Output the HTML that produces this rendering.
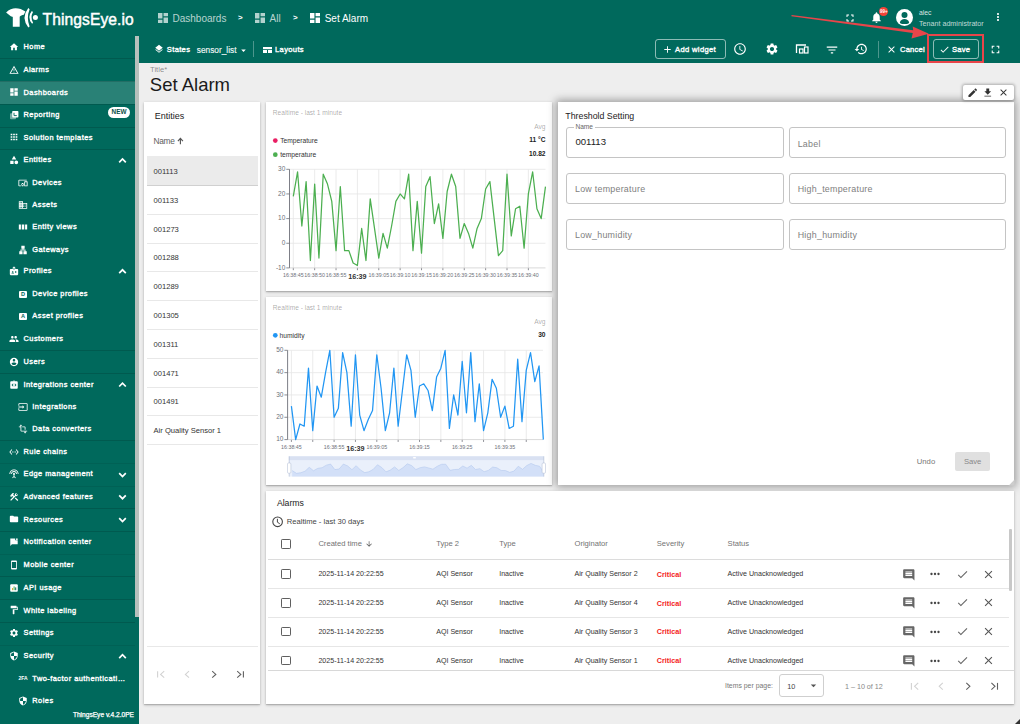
<!DOCTYPE html><html><head><meta charset='utf-8'><style>
*{box-sizing:border-box}
body{margin:0;width:1020px;height:724px;overflow:hidden;position:relative;background:#eeeeee;font-family:"Liberation Sans",sans-serif;color:#222}
.a{position:absolute}
.t{position:absolute;white-space:nowrap;line-height:1}
svg{position:absolute;overflow:visible}
.card{position:absolute;background:#fff;box-shadow:0 1px 3px rgba(0,0,0,.22),0 1px 1px rgba(0,0,0,.14)}
</style></head><body><div class="a" style="left:0px;top:0px;width:1020px;height:63px;background:#00695c"></div>
<svg style="left:0;top:0" width="40" height="30" viewBox="0 0 40 30">
<path fill="#fff" d="M6.1 12.5 C9 9.4 12.5 8.2 15.6 8.2 C19 8.2 22.5 9.3 25.4 11.6 L23.8 14.8 C22 14.9 20.6 15.8 19.7 16.8 L19.7 26.8 L12.8 26.8 L12.8 16.9 C12.2 16.6 11.6 16.6 11.1 16.6 Z"/>
<path fill="#fff" d="M28.3 8.1 Q20.8 17.8 28.3 27.5 L29.6 26.4 Q26.2 17.8 29.6 9.2 Z"/>
<path fill="#fff" d="M31.8 11.1 Q26.6 17.6 32.1 23.7 L33.1 22.8 Q29.9 17.6 33 12 Z"/>
<circle cx="35.4" cy="17.6" r="2.5" fill="#fff"/>
</svg>
<div class="t" style="left:42.50px;top:11.59px;font-size:15.6px;color:#fff;font-weight:normal;-webkit-text-stroke:0.45px #fff;letter-spacing:0.1px">ThingsEye.io</div>
<svg style="left:158px;top:13px" width="10" height="10" viewBox="3 3 18 18"><path fill="rgba(255,255,255,.7)" d="M3 13h8V3H3v10zm0 8h8v-6H3v6zm10 0h8V11h-8v10zm0-18v6h8V3h-8z"/></svg>
<svg style="left:255px;top:13px" width="10" height="10" viewBox="3 3 18 18"><path fill="rgba(255,255,255,.7)" d="M3 13h8V3H3v10zm0 8h8v-6H3v6zm10 0h8V11h-8v10zm0-18v6h8V3h-8z"/></svg>
<svg style="left:310px;top:13px" width="10" height="10" viewBox="3 3 18 18"><path fill="#fff" d="M3 13h8V3H3v10zm0 8h8v-6H3v6zm10 0h8V11h-8v10zm0-18v6h8V3h-8z"/></svg>
<div class="t" style="left:172.50px;top:14.23px;font-size:10px;color:rgba(255,255,255,.72);font-weight:normal;">Dashboards</div>
<div class="t" style="left:238.00px;top:14.23px;font-size:8px;color:#fff;font-weight:bold;">&gt;</div>
<div class="t" style="left:269.50px;top:14.23px;font-size:10px;color:rgba(255,255,255,.72);font-weight:normal;">All</div>
<div class="t" style="left:293.00px;top:14.23px;font-size:8px;color:#fff;font-weight:bold;">&gt;</div>
<div class="t" style="left:324.70px;top:14.23px;font-size:10px;color:#fff;font-weight:normal;">Set Alarm</div>
<svg style="left:844px;top:12px" width="12" height="12" viewBox="0 0 24 24"><path fill="#fff" d="M7 14H5v5h5v-2H7v-3zm-2-4h2V7h3V5H5v5zm12 7h-3v2h5v-5h-2v3zM14 5v2h3v3h2V5h-5z"/></svg>
<svg style="left:870px;top:11px" width="13" height="13" viewBox="0 0 24 24"><path fill="#fff" d="M12 22c1.1 0 2-.9 2-2h-4c0 1.1.89 2 2 2zm6-6v-5c0-3.07-1.64-5.64-4.5-6.32V4c0-.83-.67-1.5-1.5-1.5s-1.5.67-1.5 1.5v.68C7.63 5.36 6 7.92 6 11v5l-2 2v1h16v-1l-2-2z"/></svg>
<div class="a" style="left:879px;top:7px;width:9px;height:9px;border-radius:50%;background:#f44336"></div>
<div class="t" style="left:880.00px;top:9.79px;font-size:4.5px;color:#fff;font-weight:bold;">99+</div>
<div class="a" style="left:896px;top:9px;width:17px;height:17px;border-radius:50%;background:#fff;overflow:hidden"><svg style="left:0;top:0" width="17" height="17" viewBox="0 0 17 17"><circle cx="8.5" cy="6.1" r="3" fill="#00695c"/><path fill="#00695c" d="M3.8 13.9 C4.2 11.2 6.3 10.1 8.5 10.1 C10.7 10.1 12.8 11.2 13.2 13.9 C12 14.7 10.3 15.1 8.5 15.1 C6.7 15.1 5 14.7 3.8 13.9 Z"/></svg></div>
<div class="t" style="left:919.00px;top:10.34px;font-size:6.8px;color:rgba(255,255,255,.85);font-weight:normal;">alec</div>
<div class="t" style="left:919.00px;top:20.75px;font-size:7.15px;color:rgba(255,255,255,.75);font-weight:normal;">Tenant administrator</div>
<svg style="left:992px;top:11px" width="12" height="12" viewBox="0 0 24 24"><path fill="#fff" d="M12 8c1.1 0 2-.9 2-2s-.9-2-2-2-2 .9-2 2 .9 2 2 2zm0 2c-1.1 0-2 .9-2 2s.9 2 2 2 2-.9 2-2-.9-2-2-2zm0 6c-1.1 0-2 .9-2 2s.9 2 2 2 2-.9 2-2-.9-2-2-2z"/></svg>
<svg style="left:154px;top:44px" width="10" height="10" viewBox="0 0 24 24"><path fill="#fff" d="M11.99 18.54l-7.37-5.73L3 14.07l9 7 9-7-1.63-1.27-7.38 5.74zM12 16l7.36-5.73L21 9l-9-7-9 7 1.63 1.27L12 16z"/></svg>
<div class="t" style="left:166.80px;top:46.17px;font-size:7.6px;color:#fff;font-weight:normal;-webkit-text-stroke:0.35px #fff;letter-spacing:0.33px">States</div>
<div class="t" style="left:196.80px;top:46.17px;font-size:8.3px;color:rgba(255,255,255,.9);font-weight:normal;-webkit-text-stroke:0.2px rgba(255,255,255,.9)">sensor_list</div>
<svg style="left:238.3px;top:44.6px" width="11" height="11" viewBox="0 0 24 24"><path fill="#fff" d="M7 10l5 5 5-5z"/></svg>
<div class="a" style="left:253px;top:41px;width:1px;height:16px;background:rgba(255,255,255,.3)"></div>
<svg style="left:263px;top:47px" width="9" height="6" viewBox="0 0 9 6"><rect x="0" y="0" width="9" height="2.2" fill="#fff"/><rect x="0" y="3" width="4" height="3" fill="#fff"/><rect x="5" y="3" width="4" height="3" fill="#fff"/></svg>
<div class="t" style="left:275.00px;top:46.17px;font-size:7.6px;color:#fff;font-weight:normal;-webkit-text-stroke:0.35px #fff;letter-spacing:0.34px">Layouts</div>
<div class="a" style="left:655px;top:39px;width:71px;height:20px;border:1px solid rgba(255,255,255,.55);border-radius:3px"></div>
<svg style="left:661.5px;top:43.5px" width="11" height="11" viewBox="0 0 24 24"><path fill="#fff" d="M19 13h-6v6h-2v-6H5v-2h6V5h2v6h6v2z"/></svg>
<div class="t" style="left:675.00px;top:46.17px;font-size:7.6px;color:#fff;font-weight:normal;-webkit-text-stroke:0.35px #fff;letter-spacing:0.35px">Add widget</div>
<svg style="left:733px;top:42px" width="14" height="14" viewBox="0 0 24 24"><path fill="#fff" d="M11.99 2C6.47 2 2 6.48 2 12s4.47 10 9.99 10C17.52 22 22 17.52 22 12S17.52 2 11.99 2zM12 20c-4.42 0-8-3.58-8-8s3.58-8 8-8 8 3.58 8 8-3.58 8-8 8zm.5-13H11v6l5.25 3.15.75-1.23-4.5-2.67z"/></svg>
<svg style="left:765px;top:42px" width="14" height="14" viewBox="0 0 24 24"><path fill="#fff" d="M19.14 12.94c.04-.3.06-.61.06-.94 0-.32-.02-.64-.07-.94l2.03-1.58c.18-.14.23-.41.12-.61l-1.92-3.32c-.12-.22-.37-.29-.59-.22l-2.39.96c-.5-.38-1.03-.7-1.62-.94l-.36-2.54c-.04-.24-.24-.41-.48-.41h-3.84c-.24 0-.43.17-.47.41l-.36 2.540c-.59.24-1.130.57-1.62.94l-2.39-.96c-.22-.08-.47 0-.59.22L2.74 8.87c-.12.21-.08.47.12.61l2.03 1.58c-.05.3-.09.63-.09.94s.02.64.07.94l-2.03 1.58c-.18.14-.23.41-.12.61l1.92 3.32c.12.22.37.29.59.22l2.39-.96c.5.38 1.03.7 1.62.94l.36 2.54c.05.24.24.41.48.41h3.84c.24 0 .44-.17.47-.41l.36-2.54c.59-.24 1.13-.56 1.62-.94l2.39.96c.22.08.47 0 .59-.22l1.92-3.32c.12-.22.07-.47-.12-.61l-2.01-1.58zM12 15.6c-1.98 0-3.6-1.62-3.6-3.6s1.62-3.6 3.6-3.6 3.6 1.62 3.6 3.6-1.62 3.6-3.6 3.6z"/></svg>
<svg style="left:795px;top:44px" width="14" height="10" viewBox="0 0 14 10"><path fill="none" stroke="#fff" stroke-width="1.3" d="M1.5 9V1H11"/><rect x="4.5" y="5" width="3.5" height="4" fill="none" stroke="#fff" stroke-width="1.2"/><rect x="9.5" y="3" width="3.5" height="6" fill="none" stroke="#fff" stroke-width="1.2"/></svg>
<svg style="left:825px;top:43px" width="14" height="14" viewBox="0 0 24 24"><path fill="#fff" d="M10 18h4v-2h-4v2zM3 6v2h18V6H3zm3 7h12v-2H6v2z"/></svg>
<svg style="left:854px;top:42px" width="14" height="14" viewBox="0 0 24 24"><path fill="#fff" d="M13 3c-4.97 0-9 4.03-9 9H1l3.89 3.89.07.14L9 12H6c0-3.87 3.13-7 7-7s7 3.13 7 7-3.13 7-7 7c-1.93 0-3.68-.79-4.94-2.06l-1.42 1.42C8.27 19.99 10.51 21 13 21c4.97 0 9-4.03 9-9s-4.03-9-9-9zm-1 5v5l4.28 2.54.72-1.21-3.5-2.08V8H12z"/></svg>
<div class="a" style="left:878px;top:41px;width:1px;height:17px;background:rgba(255,255,255,.3)"></div>
<svg style="left:886px;top:44px" width="11" height="11" viewBox="0 0 24 24"><path fill="#fff" d="M19 6.41L17.590 5 12 10.59 6.41 5 5 6.41 10.59 12 5 17.59 6.41 19 12 13.41 17.59 19 19 17.59 13.41 12z"/></svg>
<div class="t" style="left:900.00px;top:46.17px;font-size:7.6px;color:#fff;font-weight:normal;-webkit-text-stroke:0.35px #fff;letter-spacing:0.2px">Cancel</div>
<div class="a" style="left:933px;top:39px;width:46px;height:20px;border:1px solid rgba(255,255,255,.55);border-radius:3px"></div>
<svg style="left:939px;top:43.5px" width="11" height="11" viewBox="0 0 24 24"><path fill="#fff" d="M9 16.17L4.83 12l-1.42 1.41L9 19 21 7l-1.41-1.41z"/></svg>
<div class="t" style="left:952.00px;top:46.17px;font-size:7.6px;color:#fff;font-weight:normal;-webkit-text-stroke:0.35px #fff;letter-spacing:0.2px">Save</div>
<svg style="left:989px;top:43px" width="13" height="13" viewBox="0 0 24 24"><path fill="#fff" d="M7 14H5v5h5v-2H7v-3zm-2-4h2V7h3V5H5v5zm12 7h-3v2h5v-5h-2v3zM14 5v2h3v3h2V5h-5z"/></svg>
<div class="a" style="left:927px;top:34px;width:57px;height:29px;border:2px solid #e8454a"></div>
<svg style="left:0;top:0" width="1020" height="70" viewBox="0 0 1020 70">
<path fill="#e8454a" d="M791.6 15 L913.2 30.3 L912.7 26.6 L928.8 33.7 L911.5 38.4 L912.8 32.9 L791.4 16.2 Z"/>
</svg>
<div class="a" style="left:0px;top:36px;width:139px;height:688px;background:#00695c"></div>
<div class="a" style="left:135px;top:36px;width:4px;height:581px;background:#b7c0bc"></div>
<div class="a" style="left:0px;top:81.1px;width:135px;height:22.5px;background:rgba(255,255,255,.16)"></div>
<svg style="left:8.6px;top:41.7px" width="10" height="10" viewBox="0 0 24 24"><path fill="#fff" d="M10 20v-6h4v6h5v-8h3L12 3 2 12h3v8z"/></svg>
<div class="t" style="left:23.50px;top:42.84px;font-size:7.4px;color:#fff;font-weight:normal;-webkit-text-stroke:0.35px #fff;letter-spacing:0.48px">Home</div>
<svg style="left:8.6px;top:64.5px" width="10" height="10" viewBox="0 0 24 24"><path fill="#fff" d="M12 5.99L19.53 19H4.47L12 5.99M12 2L1 21h22L12 2zm1 14h-2v2h2v-2zm0-6h-2v4h2v-4z"/></svg>
<div class="t" style="left:23.50px;top:65.64px;font-size:7.4px;color:#fff;font-weight:normal;-webkit-text-stroke:0.35px #fff;letter-spacing:0.48px">Alarms</div>
<svg style="left:8.6px;top:87.4px" width="10" height="10" viewBox="0 0 24 24"><path fill="#fff" d="M3 13h8V3H3v10zm0 8h8v-6H3v6zm10 0h8V11h-8v10zm0-18v6h8V3h-8z"/></svg>
<div class="t" style="left:23.50px;top:88.54px;font-size:7.4px;color:#fff;font-weight:normal;-webkit-text-stroke:0.35px #fff;letter-spacing:0.48px">Dashboards</div>
<svg style="left:8.6px;top:110.20px" width="10" height="10" viewBox="0 0 10 10"><rect x="1" y="3.2" width="6" height="6" rx="1" fill="rgba(255,255,255,.45)"/><rect x="3.2" y="1" width="6.2" height="6.6" rx=".8" fill="#fff"/><path d="M5 2.8V5.6H7.8" fill="none" stroke="#00695c" stroke-width=".9"/></svg>
<div class="t" style="left:23.50px;top:111.34px;font-size:7.4px;color:#fff;font-weight:normal;-webkit-text-stroke:0.35px #fff;letter-spacing:0.48px">Reporting</div>
<svg style="left:8.6px;top:132.4px" width="10" height="10" viewBox="0 0 24 24"><path fill="#fff" d="M4 8h4V4H4v4zm6 12h4v-4h-4v4zm-6 0h4v-4H4v4zm0-6h4v-4H4v4zm6 0h4v-4h-4v4zm6-10v4h4V4h-4zm-6 4h4V4h-4v4zm6 6h4v-4h-4v4zm0 6h4v-4h-4v4z"/></svg>
<div class="t" style="left:23.50px;top:133.54px;font-size:7.4px;color:#fff;font-weight:normal;-webkit-text-stroke:0.35px #fff;letter-spacing:0.48px">Solution templates</div>
<svg style="left:8.6px;top:155.3px" width="10" height="10" viewBox="0 0 24 24"><path fill="#fff" d="M12 2l-5.5 9h11zM17.5 13a4.5 4.5 0 1 0 0 9a4.5 4.5 0 1 0 0-9zM3 13.5h8v8H3z"/></svg>
<div class="t" style="left:23.50px;top:156.44px;font-size:7.4px;color:#fff;font-weight:normal;-webkit-text-stroke:0.35px #fff;letter-spacing:0.48px">Entities</div>
<svg style="left:0;top:0" width="1" height="1"><path d="M119.2 162.30 L122.5 158.90 L125.8 162.30" fill="none" stroke="#fff" stroke-width="1.7"/></svg>
<svg style="left:17.6px;top:177.8px" width="10" height="10" viewBox="0 0 24 24"><path fill="#fff" d="M3 6h18V4H3c-1.1 0-2 .9-2 2v12c0 1.1.9 2 2 2h4v-2H3V6zm10 6H9v1.78c-.61.55-1 1.33-1 2.22s.39 1.67 1 2.22V20h4v-1.78c.61-.55 1-1.34 1-2.22s-.39-1.67-1-2.22V12zm-2 5.5c-.83 0-1.5-.67-1.5-1.5s.67-1.5 1.5-1.5 1.5.67 1.5 1.5-.67 1.5-1.5 1.5zM22 8h-6c-.5 0-1 .5-1 1v10c0 .5.5 1 1 1h6c.5 0 1-.5 1-1V9c0-.5-.5-1-1-1zm-1 10h-4v-8h4v8z"/></svg>
<div class="t" style="left:32.30px;top:178.94px;font-size:7.4px;color:#fff;font-weight:normal;-webkit-text-stroke:0.35px #fff;letter-spacing:0.48px">Devices</div>
<svg style="left:17.6px;top:200px" width="10" height="10" viewBox="0 0 24 24"><path fill="#fff" d="M12 7V3H2v18h20V7H12zM6 19H4v-2h2v2zm0-4H4v-2h2v2zm0-4H4V9h2v2zm0-4H4V5h2v2zm4 12H8v-2h2v2zm0-4H8v-2h2v2zm0-4H8V9h2v2zm0-4H8V5h2v2zm10 12h-8v-2h2v-2h-2v-2h2v-2h-2V9h8v10zm-2-8h-2v2h2v-2zm0 4h-2v2h2v-2z"/></svg>
<div class="t" style="left:32.30px;top:201.14px;font-size:7.4px;color:#fff;font-weight:normal;-webkit-text-stroke:0.35px #fff;letter-spacing:0.48px">Assets</div>
<svg style="left:17.6px;top:222.3px" width="10" height="10" viewBox="0 0 24 24"><path fill="#fff" d="M2 6h5v12H2zM9 6h6v12H9zM17 6h5v12h-5z"/></svg>
<div class="t" style="left:32.30px;top:223.44px;font-size:7.4px;color:#fff;font-weight:normal;-webkit-text-stroke:0.35px #fff;letter-spacing:0.48px">Entity views</div>
<svg style="left:17.6px;top:244.8px" width="10" height="10" viewBox="0 0 24 24"><path fill="#fff" d="M13 22h8v-7h-3v-4h-5V9h3V2H8v7h3v2H6v4H3v7h8v-7H8v-2h8v2h-3z"/></svg>
<div class="t" style="left:32.30px;top:245.94px;font-size:7.4px;color:#fff;font-weight:normal;-webkit-text-stroke:0.35px #fff;letter-spacing:0.48px">Gateways</div>
<svg style="left:8.6px;top:266.2px" width="10" height="10" viewBox="0 0 24 24"><path fill="#fff" d="M20 7h-5V4c0-1.1-.9-2-2-2h-2c-1.1 0-2 .9-2 2v3H4c-1.1 0-2 .9-2 2v11c0 1.1.9 2 2 2h16c1.1 0 2-.9 2-2V9c0-1.1-.9-2-2-2zM9 12c.83 0 1.5.67 1.5 1.5S9.83 15 9 15s-1.5-.67-1.5-1.5S8.17 12 9 12zm3 6H6v-.43c0-.6.36-1.15.92-1.39.64-.28 1.34-.43 2.08-.43s1.44.15 2.08.43c.55.24.92.78.92 1.39V18zm1-9h-2V4h2v5zm4.5 7.5h-3V15h3v1.5zm0-3h-3V12h3v1.5z"/></svg>
<div class="t" style="left:23.50px;top:267.34px;font-size:7.4px;color:#fff;font-weight:normal;-webkit-text-stroke:0.35px #fff;letter-spacing:0.48px">Profiles</div>
<svg style="left:0;top:0" width="1" height="1"><path d="M119.2 273.20 L122.5 269.80 L125.8 273.20" fill="none" stroke="#fff" stroke-width="1.7"/></svg>
<div class="a" style="left:19.200000000000003px;top:290.50px;width:7.4px;height:7px;background:#fff;border-radius:1px"></div>
<div class="t" style="left:21.00px;top:291.56px;font-size:5.6px;color:#00695c;font-weight:bold;">D</div>
<div class="t" style="left:32.30px;top:290.24px;font-size:7.4px;color:#fff;font-weight:normal;-webkit-text-stroke:0.35px #fff;letter-spacing:0.48px">Device profiles</div>
<div class="a" style="left:19.200000000000003px;top:312.70px;width:7.4px;height:7px;background:#fff;border-radius:1px"></div>
<div class="t" style="left:21.00px;top:313.76px;font-size:5.6px;color:#00695c;font-weight:bold;">A</div>
<div class="t" style="left:32.30px;top:312.44px;font-size:7.4px;color:#fff;font-weight:normal;-webkit-text-stroke:0.35px #fff;letter-spacing:0.48px">Asset profiles</div>
<svg style="left:8.6px;top:333.9px" width="10" height="10" viewBox="0 0 24 24"><path fill="#fff" d="M16 11c1.66 0 2.99-1.34 2.99-3S17.66 5 16 5c-1.66 0-3 1.34-3 3s1.34 3 3 3zm-8 0c1.66 0 2.990-1.34 2.99-3S9.66 5 8 5C6.34 5 5 6.34 5 8s1.34 3 3 3zm0 2c-2.33 0-7 1.17-7 3.5V19h14v-2.5c0-2.33-4.67-3.5-7-3.5zm8 0c-.29 0-.62.02-.97.05 1.16.84 1.97 1.97 1.97 3.45V19h6v-2.5c0-2.33-4.67-3.5-7-3.5z"/></svg>
<div class="t" style="left:23.50px;top:335.04px;font-size:7.4px;color:#fff;font-weight:normal;-webkit-text-stroke:0.35px #fff;letter-spacing:0.48px">Customers</div>
<svg style="left:8.6px;top:356.7px" width="10" height="10" viewBox="0 0 24 24"><path fill="#fff" d="M12 2C6.48 2 2 6.48 2 12s4.48 10 10 10 10-4.48 10-10S17.52 2 12 2zm0 3c1.66 0 3 1.34 3 3s-1.34 3-3 3-3-1.34-3-3 1.34-3 3-3zm0 14.2c-2.5 0-4.71-1.28-6-3.220.03-1.99 4-3.08 6-3.08 1.99 0 5.97 1.09 6 3.08-1.29 1.94-3.5 3.22-6 3.22z"/></svg>
<div class="t" style="left:23.50px;top:357.84px;font-size:7.4px;color:#fff;font-weight:normal;-webkit-text-stroke:0.35px #fff;letter-spacing:0.48px">Users</div>
<svg style="left:8.6px;top:379.5px" width="10" height="10" viewBox="0 0 24 24"><path fill="#fff" d="M19 3h-4.18C14.4 1.84 13.3 1 12 1c-1.3 0-2.4.84-2.82 2H5c-1.1 0-2 .9-2 2v14c0 1.1.9 2 2 2h14c1.1 0 2-.9 2-2V5c0-1.1-.9-2-2-2zM11 14.17l-1.41 1.42L6 12l3.59-3.59L11 9.83 8.83 12 11 14.17zM12 4.25c-.41 0-.75-.34-.75-.75s.34-.75.75-.75.75.34.75.75-.34.75-.75.75zm2.41 11.34L13 14.17 15.17 12 13 9.83l1.41-1.42L18 12l-3.59 3.59z"/></svg>
<div class="t" style="left:23.50px;top:380.64px;font-size:7.4px;color:#fff;font-weight:normal;-webkit-text-stroke:0.35px #fff;letter-spacing:0.48px">Integrations center</div>
<svg style="left:0;top:0" width="1" height="1"><path d="M119.2 386.50 L122.5 383.10 L125.8 386.50" fill="none" stroke="#fff" stroke-width="1.7"/></svg>
<svg style="left:17.6px;top:401.8px" width="10" height="10" viewBox="0 0 24 24"><path fill="#fff" d="M21 3.01H3c-1.1 0-2 .9-2 2V9h2V4.99h18v14.03H3V15H1v4.01c0 1.1.9 1.98 2 1.98h18c1.1 0 2-.88 2-1.98v-14c0-1.11-.9-2-2-2zM11 16l4-4-4-4v3H1v2h10v3z"/></svg>
<div class="t" style="left:32.30px;top:402.94px;font-size:7.4px;color:#fff;font-weight:normal;-webkit-text-stroke:0.35px #fff;letter-spacing:0.48px">Integrations</div>
<svg style="left:17.6px;top:424px" width="10" height="10" viewBox="0 0 24 24"><path fill="#fff" d="M22 18v-2H8V4h2L7 1 4 4h2v2H2v2h4v8c0 1.1.9 2 2 2h8v2h-2l3 3 3-3h-2v-2h4zM10 8h6v6h2V8c0-1.1-.9-2-2-2h-6v2z"/></svg>
<div class="t" style="left:32.30px;top:425.14px;font-size:7.4px;color:#fff;font-weight:normal;-webkit-text-stroke:0.35px #fff;letter-spacing:0.48px">Data converters</div>
<svg style="left:8.6px;top:446.6px" width="10" height="10" viewBox="0 0 24 24"><path fill="#fff" d="M7.77 6.76L6.23 5.48.82 12l5.41 6.52 1.54-1.28L3.42 12l4.35-5.24zM7 13h2v-2H7v2zm10-2h-2v2h2v-2zm-6 2h2v-2h-2v2zm6.77-7.52l-1.54 1.28L20.58 12l-4.35 5.24 1.54 1.28L23.18 12l-5.41-6.52z"/></svg>
<div class="t" style="left:23.50px;top:447.74px;font-size:7.4px;color:#fff;font-weight:normal;-webkit-text-stroke:0.35px #fff;letter-spacing:0.48px">Rule chains</div>
<svg style="left:8.6px;top:469.3px" width="10" height="10" viewBox="0 0 24 24"><path fill="#fff" d="M12 5c-3.87 0-7 3.13-7 7h2c0-2.76 2.24-5 5-5s5 2.24 5 5h2c0-3.87-3.13-7-7-7zm1 9.29c.88-.39 1.5-1.26 1.5-2.29 0-1.38-1.12-2.5-2.5-2.5S9.5 10.62 9.5 12c0 1.02.62 1.9 1.5 2.29v3.3L7.59 21 9 22.41l3-3 3 3L16.41 21 13 17.59v-3.3zM12 1C5.93 1 1 5.93 1 12h2c0-4.970 4.03-9 9-9s9 4.03 9 9h2c0-6.07-4.93-11-11-11z"/></svg>
<div class="t" style="left:23.50px;top:470.44px;font-size:7.4px;color:#fff;font-weight:normal;-webkit-text-stroke:0.35px #fff;letter-spacing:0.48px">Edge management</div>
<svg style="left:0;top:0" width="1" height="1"><path d="M119.2 473.10 L122.5 476.50 L125.8 473.10" fill="none" stroke="#fff" stroke-width="1.7"/></svg>
<svg style="left:8.6px;top:491.5px" width="10" height="10" viewBox="0 0 24 24"><path fill="#fff" d="M13.78 15.17l2.12-2.12 6.36 6.36-2.12 2.12zM17.5 10c1.93 0 3.5-1.57 3.5-3.5 0-.58-.16-1.12-.41-1.6l-2.7 2.7-1.49-1.49 2.7-2.7c-.48-.25-1.02-.41-1.6-.41C15.57 3 14 4.57 14 6.5c0 .41.08.8.21 1.16l-1.85 1.85-1.78-1.78.71-.71-1.41-1.41L12 3.49c-1.17-1.17-3.07-1.17-4.24 0L4.22 7.03l1.41 1.41H2.81l-.71.71 3.54 3.54.71-.71V9.15l1.41 1.41.71-.71 1.78 1.78-7.41 7.41 2.12 2.12L16.34 9.79c.36.13.75.21 1.16.21z"/></svg>
<div class="t" style="left:23.50px;top:492.64px;font-size:7.4px;color:#fff;font-weight:normal;-webkit-text-stroke:0.35px #fff;letter-spacing:0.48px">Advanced features</div>
<svg style="left:0;top:0" width="1" height="1"><path d="M119.2 495.30 L122.5 498.70 L125.8 495.30" fill="none" stroke="#fff" stroke-width="1.7"/></svg>
<svg style="left:8.6px;top:514.4px" width="10" height="10" viewBox="0 0 24 24"><path fill="#fff" d="M10 4H4c-1.1 0-1.99.9-1.99 2L2 18c0 1.1.9 2 2 2h16c1.1 0 2-.9 2-2V8c0-1.1-.9-2-2-2h-8l-2-2z"/></svg>
<div class="t" style="left:23.50px;top:515.54px;font-size:7.4px;color:#fff;font-weight:normal;-webkit-text-stroke:0.35px #fff;letter-spacing:0.48px">Resources</div>
<svg style="left:0;top:0" width="1" height="1"><path d="M119.2 518.20 L122.5 521.60 L125.8 518.20" fill="none" stroke="#fff" stroke-width="1.7"/></svg>
<svg style="left:8.6px;top:537.20px" width="10" height="10" viewBox="0 0 10 10"><path fill="#fff" d="M1.3 1.6 H6.2 V3.3 H8.7 V7.2 H2.9 L1.3 8.9 Z"/><rect x="7" y="1.5" width="1.7" height="1.4" fill="#fff"/></svg>
<div class="t" style="left:23.50px;top:538.34px;font-size:7.4px;color:#fff;font-weight:normal;-webkit-text-stroke:0.35px #fff;letter-spacing:0.48px">Notification center</div>
<svg style="left:8.6px;top:559.7px" width="10" height="10" viewBox="0 0 24 24"><path fill="#fff" d="M17 1.01L7 1c-1.1 0-1.99.9-1.99 2v18c0 1.1.89 2 1.99 2h10c1.1 0 2-.9 2-2V3c0-1.1-.9-1.99-2-1.99zM17 19H7V5h10v14z"/></svg>
<div class="t" style="left:23.50px;top:560.84px;font-size:7.4px;color:#fff;font-weight:normal;-webkit-text-stroke:0.35px #fff;letter-spacing:0.48px">Mobile center</div>
<svg style="left:8.6px;top:582.60px" width="10" height="10" viewBox="0 0 10 10"><rect x="1.2" y="1.2" width="7.6" height="7.6" rx="1" fill="#fff"/><rect x="3" y="5" width="1" height="2.2" fill="#e0b030"/><rect x="4.6" y="3.4" width="1" height="3.8" fill="#4caf50"/><rect x="6.2" y="4.4" width="1" height="2.8" fill="#00695c"/></svg>
<div class="t" style="left:23.50px;top:583.74px;font-size:7.4px;color:#fff;font-weight:normal;-webkit-text-stroke:0.35px #fff;letter-spacing:0.48px">API usage</div>
<svg style="left:8.6px;top:605.4px" width="10" height="10" viewBox="0 0 24 24"><path fill="#fff" d="M18 4V3c0-.55-.45-1-1-1H5c-.55 0-1 .45-1 1v4c0 .55.45 1 1 1h12c.55 0 1-.45 1-1V6h1v4H9v11c0 .55.45 1 1 1h2c.55 0 1-.45 1-1v-9h8V4h-3z"/></svg>
<div class="t" style="left:23.50px;top:606.54px;font-size:7.4px;color:#fff;font-weight:normal;-webkit-text-stroke:0.35px #fff;letter-spacing:0.48px">White labeling</div>
<svg style="left:8.6px;top:628.3px" width="10" height="10" viewBox="0 0 24 24"><path fill="#fff" d="M19.14 12.94c.04-.3.06-.61.06-.94 0-.32-.02-.64-.07-.94l2.03-1.58c.18-.14.23-.41.12-.61l-1.92-3.32c-.12-.22-.37-.29-.59-.22l-2.39.96c-.5-.38-1.03-.7-1.62-.94l-.36-2.54c-.04-.24-.24-.41-.48-.41h-3.84c-.24 0-.43.17-.47.41l-.36 2.540c-.59.24-1.130.57-1.62.94l-2.39-.96c-.22-.08-.47 0-.59.22L2.74 8.87c-.12.21-.08.47.12.61l2.03 1.58c-.05.3-.09.63-.09.94s.02.64.07.94l-2.03 1.58c-.18.14-.23.41-.12.61l1.92 3.32c.12.22.37.29.59.22l2.39-.96c.5.38 1.03.7 1.62.94l.36 2.54c.05.24.24.41.48.41h3.84c.24 0 .44-.17.47-.41l.36-2.54c.59-.24 1.13-.56 1.62-.94l2.39.96c.22.08.47 0 .59-.22l1.92-3.32c.12-.22.07-.47-.12-.61l-2.01-1.58zM12 15.6c-1.98 0-3.6-1.62-3.6-3.6s1.62-3.6 3.6-3.6 3.6 1.62 3.6 3.6-1.62 3.6-3.6 3.6z"/></svg>
<div class="t" style="left:23.50px;top:629.44px;font-size:7.4px;color:#fff;font-weight:normal;-webkit-text-stroke:0.35px #fff;letter-spacing:0.48px">Settings</div>
<svg style="left:8.6px;top:651.1px" width="10" height="10" viewBox="0 0 24 24"><path fill="#fff" d="M12 1L3 5v6c0 5.55 3.84 10.74 9 12 5.16-1.26 9-6.45 9-12V5l-9-4zm0 10.99h7c-.53 4.12-3.28 7.79-7 8.94V12H5V6.3l7-3.11v8.8z"/></svg>
<div class="t" style="left:23.50px;top:652.24px;font-size:7.4px;color:#fff;font-weight:normal;-webkit-text-stroke:0.35px #fff;letter-spacing:0.48px">Security</div>
<svg style="left:0;top:0" width="1" height="1"><path d="M119.2 658.10 L122.5 654.70 L125.8 658.10" fill="none" stroke="#fff" stroke-width="1.7"/></svg>
<div class="t" style="left:18.40px;top:676.27px;font-size:5px;color:#fff;font-weight:bold;">2FA</div>
<div class="t" style="left:32.30px;top:674.64px;font-size:7.4px;color:#fff;font-weight:normal;-webkit-text-stroke:0.35px #fff;letter-spacing:0.48px">Two-factor authenticati…</div>
<svg style="left:17.6px;top:695.8px" width="10" height="10" viewBox="0 0 24 24"><path fill="#fff" d="M12 1L3 5v6c0 5.55 3.84 10.74 9 12 5.16-1.26 9-6.45 9-12V5l-9-4zm0 10.99h7c-.53 4.12-3.28 7.79-7 8.94V12H5V6.3l7-3.11v8.8z"/></svg>
<div class="t" style="left:32.30px;top:696.94px;font-size:7.4px;color:#fff;font-weight:normal;-webkit-text-stroke:0.35px #fff;letter-spacing:0.48px">Roles</div>
<div class="a" style="left:0px;top:57.9px;width:135px;height:1px;background:rgba(0,0,0,0.14)"></div>
<div class="a" style="left:0px;top:81.1px;width:135px;height:1px;background:rgba(0,0,0,0.14)"></div>
<div class="a" style="left:0px;top:103.6px;width:135px;height:1px;background:rgba(0,0,0,0.14)"></div>
<div class="a" style="left:0px;top:126.5px;width:135px;height:1px;background:rgba(0,0,0,0.14)"></div>
<div class="a" style="left:0px;top:149.3px;width:135px;height:1px;background:rgba(0,0,0,0.14)"></div>
<div class="a" style="left:0px;top:350.4px;width:135px;height:1px;background:rgba(0,0,0,0.14)"></div>
<div class="a" style="left:0px;top:373.3px;width:135px;height:1px;background:rgba(0,0,0,0.14)"></div>
<div class="a" style="left:0px;top:440.3px;width:135px;height:1px;background:rgba(0,0,0,0.14)"></div>
<div class="a" style="left:0px;top:463.2px;width:135px;height:1px;background:rgba(0,0,0,0.07)"></div>
<div class="a" style="left:0px;top:485.5px;width:135px;height:1px;background:rgba(0,0,0,0.07)"></div>
<div class="a" style="left:0px;top:508.4px;width:135px;height:1px;background:rgba(0,0,0,0.14)"></div>
<div class="a" style="left:0px;top:531.2px;width:135px;height:1px;background:rgba(0,0,0,0.14)"></div>
<div class="a" style="left:0px;top:553.8px;width:135px;height:1px;background:rgba(0,0,0,0.07)"></div>
<div class="a" style="left:0px;top:576.3px;width:135px;height:1px;background:rgba(0,0,0,0.14)"></div>
<div class="a" style="left:0px;top:599.2px;width:135px;height:1px;background:rgba(0,0,0,0.14)"></div>
<div class="a" style="left:0px;top:622px;width:135px;height:1px;background:rgba(0,0,0,0.14)"></div>
<div class="a" style="left:0px;top:644.8px;width:135px;height:1px;background:rgba(0,0,0,0.07)"></div>
<div class="a" style="left:108px;top:106.5px;width:22px;height:11px;border-radius:6px;background:#fff"></div>
<div class="t" style="left:111.60px;top:109.28px;font-size:6.4px;color:#0b4f47;font-weight:bold;">NEW</div>
<div class="t" style="left:40px;width:94px;text-align:right;top:711.61px;font-size:6.6px;color:#fff;-webkit-text-stroke:0.25px #fff">ThingsEye v.4.2.0PE</div>
<div class="t" style="left:150.00px;top:65.78px;font-size:7.7px;color:rgba(0,0,0,.45);font-weight:normal;">Title*</div>
<div class="t" style="left:149.80px;top:76.14px;font-size:18.5px;color:#1a1a1a;font-weight:normal;">Set Alarm</div>
<div class="card" style="left:144px;top:102px;width:116px;height:602px"></div>
<div class="card" style="left:266px;top:102px;width:286px;height:189px"></div>
<div class="card" style="left:266px;top:297px;width:286px;height:188px"></div>
<div class="card" style="left:558px;top:102px;width:456px;height:383px;box-shadow:0 0 8px 2px rgba(0,0,0,.35)"></div>
<div class="card" style="left:266px;top:491px;width:748px;height:213px"></div>
<svg style="left:0;top:0" width="1" height="1"><path d="M1008.8 485.6 L1014.6 485.6 L1014.6 479.4 Z" fill="#cdcdcd"/></svg>
<div class="t" style="left:154.80px;top:112.28px;font-size:9px;color:#222;font-weight:normal;">Entities</div>
<div class="t" style="left:153.50px;top:137.27px;font-size:8.3px;color:#5c5c5c;font-weight:normal;letter-spacing:-0.25px">Name</div>
<svg style="left:0;top:0" width="1" height="1"><path d="M180.4 144.2 V138.6 M177.9 141.1 L180.4 138.4 L182.9 141.1" fill="none" stroke="#555" stroke-width="1.15"/></svg>
<div class="a" style="left:146.6px;top:156px;width:111.5px;height:29.5px;background:#ebebeb"></div>
<div class="a" style="left:146.6px;top:184.9px;width:111.5px;height:1px;background:#d0d0d0"></div>
<div class="t" style="left:153.50px;top:168.07px;font-size:7.6px;color:#333;font-weight:normal;">001113</div>
<div class="a" style="left:146.6px;top:213.7px;width:111.5px;height:1px;background:#e8e8e8"></div>
<div class="t" style="left:153.50px;top:196.87px;font-size:7.6px;color:#333;font-weight:normal;">001133</div>
<div class="a" style="left:146.6px;top:242.5px;width:111.5px;height:1px;background:#e8e8e8"></div>
<div class="t" style="left:153.50px;top:225.67px;font-size:7.6px;color:#333;font-weight:normal;">001273</div>
<div class="a" style="left:146.6px;top:271.3px;width:111.5px;height:1px;background:#e8e8e8"></div>
<div class="t" style="left:153.50px;top:254.47px;font-size:7.6px;color:#333;font-weight:normal;">001288</div>
<div class="a" style="left:146.6px;top:300.1px;width:111.5px;height:1px;background:#e8e8e8"></div>
<div class="t" style="left:153.50px;top:283.27px;font-size:7.6px;color:#333;font-weight:normal;">001289</div>
<div class="a" style="left:146.6px;top:328.9px;width:111.5px;height:1px;background:#e8e8e8"></div>
<div class="t" style="left:153.50px;top:312.07px;font-size:7.6px;color:#333;font-weight:normal;">001305</div>
<div class="a" style="left:146.6px;top:357.7px;width:111.5px;height:1px;background:#e8e8e8"></div>
<div class="t" style="left:153.50px;top:340.87px;font-size:7.6px;color:#333;font-weight:normal;">001311</div>
<div class="a" style="left:146.6px;top:386.5px;width:111.5px;height:1px;background:#e8e8e8"></div>
<div class="t" style="left:153.50px;top:369.67px;font-size:7.6px;color:#333;font-weight:normal;">001471</div>
<div class="a" style="left:146.6px;top:415.3px;width:111.5px;height:1px;background:#e8e8e8"></div>
<div class="t" style="left:153.50px;top:398.47px;font-size:7.6px;color:#333;font-weight:normal;">001491</div>
<div class="a" style="left:146.6px;top:444.1px;width:111.5px;height:1px;background:#e8e8e8"></div>
<div class="t" style="left:153.50px;top:427.27px;font-size:7.6px;color:#333;font-weight:normal;">Air Quality Sensor 1</div>
<div class="a" style="left:146.6px;top:646px;width:111.5px;height:1px;background:#e8e8e8"></div>
<svg style="left:0;top:0" width="1" height="1"><path d="M157.6 671.1999999999999 V677.6" stroke="#d2d2d2" stroke-width="1.1" fill="none"/><path d="M164.2 671.1999999999999 L160.6 674.4 L164.2 677.6" stroke="#d2d2d2" stroke-width="1.1" fill="none"/><path d="M189.0 671.1999999999999 L185.4 674.4 L189.0 677.6" stroke="#d2d2d2" stroke-width="1.1" fill="none"/><path d="M212.2 671.1999999999999 L215.79999999999998 674.4 L212.2 677.6" stroke="#606060" stroke-width="1.1" fill="none"/><path d="M237.2 671.1999999999999 L240.79999999999998 674.4 L237.2 677.6" stroke="#606060" stroke-width="1.1" fill="none"/><path d="M243.4 671.1999999999999 V677.6" stroke="#606060" stroke-width="1.1" fill="none"/></svg>
<svg style="left:0;top:0" width="1020" height="724"><path d="M1020 719 L1020 724 L1015 724 Z" fill="#333"/></svg>
<div class="t" style="left:272.80px;top:109.61px;font-size:6.6px;color:rgba(0,0,0,.35);font-weight:normal;">Realtime - last 1 minute</div>
<div class="t" style="left:495px;width:50.5px;text-align:right;top:123.51px;font-size:6.6px;color:rgba(0,0,0,.35)">Avg</div>
<svg style="left:0;top:0" width="1020" height="724"><circle cx="275.3" cy="140.6" r="2.35" fill="#e91e63"/><circle cx="275.3" cy="154.7" r="2.35" fill="#4caf50"/><circle cx="275.3" cy="335.3" r="2.35" fill="#2196f3"/></svg>
<div class="t" style="left:280.20px;top:138.43px;font-size:6.7px;color:#333;font-weight:normal;">Temperature</div>
<div class="t" style="left:280.20px;top:152.43px;font-size:6.7px;color:#333;font-weight:normal;">temperature</div>
<div class="t" style="left:495px;width:50.5px;text-align:right;top:137.21px;font-size:6.6px;color:#222;font-weight:bold">11 °C</div>
<div class="t" style="left:495px;width:50.5px;text-align:right;top:151.31px;font-size:6.6px;color:#222;font-weight:bold">10.82</div>
<svg style="left:0;top:0" width="1020" height="724"><line x1="293.30" y1="169.3" x2="293.30" y2="267.9" stroke="#e6e6e6" stroke-width="0.8"/><line x1="293.30" y1="267.9" x2="293.30" y2="270.2" stroke="#6e7079" stroke-width="0.8"/><line x1="314.67" y1="169.3" x2="314.67" y2="267.9" stroke="#e6e6e6" stroke-width="0.8"/><line x1="314.67" y1="267.9" x2="314.67" y2="270.2" stroke="#6e7079" stroke-width="0.8"/><line x1="336.04" y1="169.3" x2="336.04" y2="267.9" stroke="#e6e6e6" stroke-width="0.8"/><line x1="336.04" y1="267.9" x2="336.04" y2="270.2" stroke="#6e7079" stroke-width="0.8"/><line x1="357.41" y1="169.3" x2="357.41" y2="267.9" stroke="#e6e6e6" stroke-width="0.8"/><line x1="357.41" y1="267.9" x2="357.41" y2="270.2" stroke="#6e7079" stroke-width="0.8"/><line x1="378.78" y1="169.3" x2="378.78" y2="267.9" stroke="#e6e6e6" stroke-width="0.8"/><line x1="378.78" y1="267.9" x2="378.78" y2="270.2" stroke="#6e7079" stroke-width="0.8"/><line x1="400.15" y1="169.3" x2="400.15" y2="267.9" stroke="#e6e6e6" stroke-width="0.8"/><line x1="400.15" y1="267.9" x2="400.15" y2="270.2" stroke="#6e7079" stroke-width="0.8"/><line x1="421.52" y1="169.3" x2="421.52" y2="267.9" stroke="#e6e6e6" stroke-width="0.8"/><line x1="421.52" y1="267.9" x2="421.52" y2="270.2" stroke="#6e7079" stroke-width="0.8"/><line x1="442.89" y1="169.3" x2="442.89" y2="267.9" stroke="#e6e6e6" stroke-width="0.8"/><line x1="442.89" y1="267.9" x2="442.89" y2="270.2" stroke="#6e7079" stroke-width="0.8"/><line x1="464.26" y1="169.3" x2="464.26" y2="267.9" stroke="#e6e6e6" stroke-width="0.8"/><line x1="464.26" y1="267.9" x2="464.26" y2="270.2" stroke="#6e7079" stroke-width="0.8"/><line x1="485.63" y1="169.3" x2="485.63" y2="267.9" stroke="#e6e6e6" stroke-width="0.8"/><line x1="485.63" y1="267.9" x2="485.63" y2="270.2" stroke="#6e7079" stroke-width="0.8"/><line x1="507.00" y1="169.3" x2="507.00" y2="267.9" stroke="#e6e6e6" stroke-width="0.8"/><line x1="507.00" y1="267.9" x2="507.00" y2="270.2" stroke="#6e7079" stroke-width="0.8"/><line x1="528.37" y1="169.3" x2="528.37" y2="267.9" stroke="#e6e6e6" stroke-width="0.8"/><line x1="528.37" y1="267.9" x2="528.37" y2="270.2" stroke="#6e7079" stroke-width="0.8"/><line x1="289.5" y1="169.3" x2="545.5" y2="169.3" stroke="#e6e6e6" stroke-width="0.8"/><line x1="286.3" y1="169.3" x2="289.5" y2="169.3" stroke="#6e7079" stroke-width="0.8"/><line x1="289.5" y1="193.95" x2="545.5" y2="193.95" stroke="#e6e6e6" stroke-width="0.8"/><line x1="286.3" y1="193.95" x2="289.5" y2="193.95" stroke="#6e7079" stroke-width="0.8"/><line x1="289.5" y1="218.6" x2="545.5" y2="218.6" stroke="#e6e6e6" stroke-width="0.8"/><line x1="286.3" y1="218.6" x2="289.5" y2="218.6" stroke="#6e7079" stroke-width="0.8"/><line x1="289.5" y1="243.25" x2="545.5" y2="243.25" stroke="#e6e6e6" stroke-width="0.8"/><line x1="286.3" y1="243.25" x2="289.5" y2="243.25" stroke="#6e7079" stroke-width="0.8"/><line x1="289.5" y1="267.9" x2="545.5" y2="267.9" stroke="#cfcfcf" stroke-width="0.8"/><line x1="286.3" y1="267.9" x2="289.5" y2="267.9" stroke="#6e7079" stroke-width="0.8"/><line x1="289.5" y1="169.3" x2="289.5" y2="267.9" stroke="#6e7079" stroke-width="0.9"/><polyline points="293.30,196.42 297.57,171.77 301.85,226.00 306.12,181.62 310.40,260.50 314.67,184.09 318.94,258.04 323.22,174.23 327.49,184.09 331.77,201.34 336.04,250.64 340.31,186.56 344.59,250.64 348.86,250.64 353.14,262.97 357.41,265.44 361.68,228.46 365.96,260.50 370.23,198.88 374.51,228.46 378.78,258.04 383.05,233.39 387.33,248.18 391.60,226.00 395.88,201.34 400.15,193.95 404.42,198.88 408.70,174.23 412.97,250.64 417.25,201.34 421.52,253.11 425.79,186.56 430.07,176.69 434.34,223.53 438.62,203.81 442.89,238.32 447.16,191.49 451.44,174.23 455.71,186.56 459.99,238.32 464.26,223.53 468.53,233.39 472.81,248.18 477.08,228.46 481.36,218.60 485.63,189.02 489.90,181.62 494.18,218.60 498.45,255.57 502.73,250.64 507.00,174.23 511.27,235.85 515.55,208.74 519.82,206.28 524.10,248.18 528.37,193.95 532.64,171.77 536.92,208.74 541.19,218.60 545.47,186.56" fill="none" stroke="#4caf50" stroke-width="1.25" stroke-linejoin="round"/></svg>
<div class="t" style="left:235.3px;width:50px;text-align:right;top:166.10px;font-size:6.5px;color:#6e7079">30</div>
<div class="t" style="left:235.3px;width:50px;text-align:right;top:190.75px;font-size:6.5px;color:#6e7079">20</div>
<div class="t" style="left:235.3px;width:50px;text-align:right;top:215.40px;font-size:6.5px;color:#6e7079">10</div>
<div class="t" style="left:235.3px;width:50px;text-align:right;top:240.05px;font-size:6.5px;color:#6e7079">0</div>
<div class="t" style="left:235.3px;width:50px;text-align:right;top:264.70px;font-size:6.5px;color:#6e7079">-10</div>
<div class="t" style="left:268.3px;width:50px;text-align:center;top:272.71px;font-size:5.3px;color:#6e7079">16:38:45</div>
<div class="t" style="left:289.67px;width:50px;text-align:center;top:272.71px;font-size:5.3px;color:#6e7079">16:38:50</div>
<div class="t" style="left:311.04px;width:50px;text-align:center;top:272.71px;font-size:5.3px;color:#6e7079">16:38:55</div>
<div class="t" style="left:332.41px;width:50px;text-align:center;top:272.51px;font-size:7.2px;color:#333;font-weight:bold">16:39</div>
<div class="t" style="left:353.78000000000003px;width:50px;text-align:center;top:272.71px;font-size:5.3px;color:#6e7079">16:39:05</div>
<div class="t" style="left:375.15000000000003px;width:50px;text-align:center;top:272.71px;font-size:5.3px;color:#6e7079">16:39:10</div>
<div class="t" style="left:396.52px;width:50px;text-align:center;top:272.71px;font-size:5.3px;color:#6e7079">16:39:15</div>
<div class="t" style="left:417.89px;width:50px;text-align:center;top:272.71px;font-size:5.3px;color:#6e7079">16:39:20</div>
<div class="t" style="left:439.26px;width:50px;text-align:center;top:272.71px;font-size:5.3px;color:#6e7079">16:39:25</div>
<div class="t" style="left:460.63px;width:50px;text-align:center;top:272.71px;font-size:5.3px;color:#6e7079">16:39:30</div>
<div class="t" style="left:482.0px;width:50px;text-align:center;top:272.71px;font-size:5.3px;color:#6e7079">16:39:35</div>
<div class="t" style="left:503.37px;width:50px;text-align:center;top:272.71px;font-size:5.3px;color:#6e7079">16:39:40</div>
<div class="t" style="left:272.80px;top:304.81px;font-size:6.6px;color:rgba(0,0,0,.35);font-weight:normal;">Realtime - last 1 minute</div>
<div class="t" style="left:495px;width:50.5px;text-align:right;top:318.71px;font-size:6.6px;color:rgba(0,0,0,.35)">Avg</div>
<div class="t" style="left:279.60px;top:332.73px;font-size:6.7px;color:#333;font-weight:normal;">humidity</div>
<div class="t" style="left:495px;width:50.5px;text-align:right;top:332.41px;font-size:6.6px;color:#222;font-weight:bold">30</div>
<svg style="left:0;top:0" width="1020" height="724"><line x1="291.40" y1="350.3" x2="291.40" y2="439.6" stroke="#e6e6e6" stroke-width="0.8"/><line x1="291.40" y1="439.6" x2="291.40" y2="441.90000000000003" stroke="#6e7079" stroke-width="0.8"/><line x1="312.75" y1="350.3" x2="312.75" y2="439.6" stroke="#e6e6e6" stroke-width="0.8"/><line x1="312.75" y1="439.6" x2="312.75" y2="441.90000000000003" stroke="#6e7079" stroke-width="0.8"/><line x1="334.10" y1="350.3" x2="334.10" y2="439.6" stroke="#e6e6e6" stroke-width="0.8"/><line x1="334.10" y1="439.6" x2="334.10" y2="441.90000000000003" stroke="#6e7079" stroke-width="0.8"/><line x1="355.45" y1="350.3" x2="355.45" y2="439.6" stroke="#e6e6e6" stroke-width="0.8"/><line x1="355.45" y1="439.6" x2="355.45" y2="441.90000000000003" stroke="#6e7079" stroke-width="0.8"/><line x1="376.80" y1="350.3" x2="376.80" y2="439.6" stroke="#e6e6e6" stroke-width="0.8"/><line x1="376.80" y1="439.6" x2="376.80" y2="441.90000000000003" stroke="#6e7079" stroke-width="0.8"/><line x1="398.15" y1="350.3" x2="398.15" y2="439.6" stroke="#e6e6e6" stroke-width="0.8"/><line x1="398.15" y1="439.6" x2="398.15" y2="441.90000000000003" stroke="#6e7079" stroke-width="0.8"/><line x1="419.50" y1="350.3" x2="419.50" y2="439.6" stroke="#e6e6e6" stroke-width="0.8"/><line x1="419.50" y1="439.6" x2="419.50" y2="441.90000000000003" stroke="#6e7079" stroke-width="0.8"/><line x1="440.85" y1="350.3" x2="440.85" y2="439.6" stroke="#e6e6e6" stroke-width="0.8"/><line x1="440.85" y1="439.6" x2="440.85" y2="441.90000000000003" stroke="#6e7079" stroke-width="0.8"/><line x1="462.20" y1="350.3" x2="462.20" y2="439.6" stroke="#e6e6e6" stroke-width="0.8"/><line x1="462.20" y1="439.6" x2="462.20" y2="441.90000000000003" stroke="#6e7079" stroke-width="0.8"/><line x1="483.55" y1="350.3" x2="483.55" y2="439.6" stroke="#e6e6e6" stroke-width="0.8"/><line x1="483.55" y1="439.6" x2="483.55" y2="441.90000000000003" stroke="#6e7079" stroke-width="0.8"/><line x1="504.90" y1="350.3" x2="504.90" y2="439.6" stroke="#e6e6e6" stroke-width="0.8"/><line x1="504.90" y1="439.6" x2="504.90" y2="441.90000000000003" stroke="#6e7079" stroke-width="0.8"/><line x1="526.25" y1="350.3" x2="526.25" y2="439.6" stroke="#e6e6e6" stroke-width="0.8"/><line x1="526.25" y1="439.6" x2="526.25" y2="441.90000000000003" stroke="#6e7079" stroke-width="0.8"/><line x1="287.6" y1="350.3" x2="543" y2="350.3" stroke="#e6e6e6" stroke-width="0.8"/><line x1="284.40000000000003" y1="350.3" x2="287.6" y2="350.3" stroke="#6e7079" stroke-width="0.8"/><line x1="287.6" y1="372.63" x2="543" y2="372.63" stroke="#e6e6e6" stroke-width="0.8"/><line x1="284.40000000000003" y1="372.63" x2="287.6" y2="372.63" stroke="#6e7079" stroke-width="0.8"/><line x1="287.6" y1="394.95" x2="543" y2="394.95" stroke="#e6e6e6" stroke-width="0.8"/><line x1="284.40000000000003" y1="394.95" x2="287.6" y2="394.95" stroke="#6e7079" stroke-width="0.8"/><line x1="287.6" y1="417.28" x2="543" y2="417.28" stroke="#e6e6e6" stroke-width="0.8"/><line x1="284.40000000000003" y1="417.28" x2="287.6" y2="417.28" stroke="#6e7079" stroke-width="0.8"/><line x1="287.6" y1="439.6" x2="543" y2="439.6" stroke="#cfcfcf" stroke-width="0.8"/><line x1="284.40000000000003" y1="439.6" x2="287.6" y2="439.6" stroke="#6e7079" stroke-width="0.8"/><line x1="287.6" y1="350.3" x2="287.6" y2="439.6" stroke="#6e7079" stroke-width="0.9"/><polyline points="291.40,406.11 295.67,439.60 299.94,423.97 304.21,426.21 308.48,368.16 312.75,430.67 317.02,386.02 321.29,397.18 325.56,372.62 329.83,350.30 334.10,417.28 338.37,408.35 342.64,352.53 346.91,372.62 351.18,426.21 355.45,354.76 359.72,415.04 363.99,430.67 368.26,419.51 372.53,410.58 376.80,354.76 381.07,388.25 385.34,430.67 389.61,412.81 393.88,368.16 398.15,426.21 402.42,390.49 406.69,354.76 410.96,370.39 415.23,417.28 419.50,386.02 423.77,383.79 428.04,390.49 432.31,410.58 436.58,377.09 440.85,368.16 445.12,350.30 449.39,428.44 453.66,394.95 457.93,415.04 462.20,361.46 466.47,412.81 470.74,352.53 475.01,421.74 479.28,383.79 483.55,430.67 487.82,412.81 492.09,379.32 496.36,388.25 500.63,417.28 504.90,406.11 509.17,428.44 513.44,426.21 517.71,359.23 521.98,421.74 526.25,370.39 530.52,352.53 534.79,381.56 539.06,365.93 543.33,439.60" fill="none" stroke="#2196f3" stroke-width="1.25" stroke-linejoin="round"/></svg>
<div class="t" style="left:233.40000000000003px;width:50px;text-align:right;top:347.10px;font-size:6.5px;color:#6e7079">50</div>
<div class="t" style="left:233.40000000000003px;width:50px;text-align:right;top:369.43px;font-size:6.5px;color:#6e7079">40</div>
<div class="t" style="left:233.40000000000003px;width:50px;text-align:right;top:391.75px;font-size:6.5px;color:#6e7079">30</div>
<div class="t" style="left:233.40000000000003px;width:50px;text-align:right;top:414.08px;font-size:6.5px;color:#6e7079">20</div>
<div class="t" style="left:233.40000000000003px;width:50px;text-align:right;top:436.40px;font-size:6.5px;color:#6e7079">10</div>
<div class="t" style="left:266.4px;width:50px;text-align:center;top:444.71px;font-size:5.3px;color:#6e7079">16:38:45</div>
<div class="t" style="left:309.09999999999997px;width:50px;text-align:center;top:444.71px;font-size:5.3px;color:#6e7079">16:38:55</div>
<div class="t" style="left:330.45px;width:50px;text-align:center;top:444.71px;font-size:7.2px;color:#333;font-weight:bold">16:39</div>
<div class="t" style="left:351.79999999999995px;width:50px;text-align:center;top:444.71px;font-size:5.3px;color:#6e7079">16:39:05</div>
<div class="t" style="left:394.5px;width:50px;text-align:center;top:444.71px;font-size:5.3px;color:#6e7079">16:39:15</div>
<div class="t" style="left:437.2px;width:50px;text-align:center;top:444.71px;font-size:5.3px;color:#6e7079">16:39:25</div>
<div class="t" style="left:479.9px;width:50px;text-align:center;top:444.71px;font-size:5.3px;color:#6e7079">16:39:35</div>
<svg style="left:0;top:0" width="1020" height="724"><rect x="288.9" y="456.3" width="254.9" height="20.3" fill="#eaf0fb"/><rect x="288.9" y="456.3" width="254.9" height="3.8" fill="#d9e1f2"/><path d="M292.20,476.6 L292.20,470.59 L296.46,473.35 L300.73,472.73 L305.00,471.22 L309.26,467.31 L313.52,470.75 L317.79,468.30 L322.06,467.73 L326.32,465.18 L330.58,464.08 L334.85,469.60 L339.12,469.03 L343.38,464.08 L347.64,465.91 L351.91,469.71 L356.17,465.70 L360.44,470.02 L364.70,472.62 L368.97,471.74 L373.24,469.34 L377.50,464.71 L381.76,467.52 L386.03,471.84 L390.29,470.12 L394.56,466.90 L398.82,470.44 L403.09,467.62 L407.35,463.82 L411.62,465.54 L415.88,469.55 L420.15,467.68 L424.41,466.90 L428.68,467.94 L432.94,469.19 L437.21,466.32 L441.47,464.29 L445.74,464.24 L450.00,470.33 L454.27,469.50 L458.53,469.34 L462.80,466.01 L467.06,468.15 L471.33,465.33 L475.59,469.50 L479.86,468.67 L484.12,471.74 L488.39,470.39 L492.65,467.05 L496.92,467.78 L501.18,470.44 L505.45,470.59 L509.71,472.36 L513.98,471.11 L518.25,466.27 L522.51,469.34 L526.77,465.59 L531.04,463.41 L535.30,465.33 L539.57,466.27 L543.84,472.78 L543.84,476.6 Z" fill="#d3e0f8" stroke="none"/><polyline points="292.20,470.59 296.46,473.35 300.73,472.73 305.00,471.22 309.26,467.31 313.52,470.75 317.79,468.30 322.06,467.73 326.32,465.18 330.58,464.08 334.85,469.60 339.12,469.03 343.38,464.08 347.64,465.91 351.91,469.71 356.17,465.70 360.44,470.02 364.70,472.62 368.97,471.74 373.24,469.34 377.50,464.71 381.76,467.52 386.03,471.84 390.29,470.12 394.56,466.90 398.82,470.44 403.09,467.62 407.35,463.82 411.62,465.54 415.88,469.55 420.15,467.68 424.41,466.90 428.68,467.94 432.94,469.19 437.21,466.32 441.47,464.29 445.74,464.24 450.00,470.33 454.27,469.50 458.53,469.34 462.80,466.01 467.06,468.15 471.33,465.33 475.59,469.50 479.86,468.67 484.12,471.74 488.39,470.39 492.65,467.05 496.92,467.78 501.18,470.44 505.45,470.59 509.71,472.36 513.98,471.11 518.25,466.27 522.51,469.34 526.77,465.59 531.04,463.41 535.30,465.33 539.57,466.27 543.84,472.78" fill="none" stroke="#b5c9ef" stroke-width="0.6"/><line x1="289.2" y1="456.3" x2="289.2" y2="476.6" stroke="#acb8d1" stroke-width="0.6"/><rect x="287.5" y="463" width="3.4" height="10.2" rx="1" fill="#fff" stroke="#acb8d1" stroke-width="0.5"/><line x1="543.8" y1="456.3" x2="543.8" y2="476.6" stroke="#acb8d1" stroke-width="0.6"/><rect x="542.0999999999999" y="463" width="3.4" height="10.2" rx="1" fill="#fff" stroke="#acb8d1" stroke-width="0.5"/><rect x="413" y="457" width="3" height="1.5" rx=".7" fill="#fff"/></svg>
<div class="t" style="left:565.30px;top:111.65px;font-size:8.8px;color:#222;font-weight:normal;">Threshold Setting</div>
<div class="a" style="left:566px;top:127.3px;width:217.6px;height:30.6px;border:1px solid #c4c4c4;border-radius:3px"></div>
<div class="a" style="left:573.5px;top:126.3px;width:21.5px;height:2px;background:#fff"></div>
<div class="t" style="left:575.40px;top:124.01px;font-size:6.6px;color:#666;font-weight:normal;">Name</div>
<div class="t" style="left:575.40px;top:137.47px;font-size:9.6px;color:#222;font-weight:normal;">001113</div>
<div class="a" style="left:789.3px;top:127.3px;width:217px;height:30.6px;border:1px solid #c4c4c4;border-radius:3px"></div>
<div class="t" style="left:797.70px;top:139.77px;font-size:8.9px;color:#808080;font-weight:normal;letter-spacing:0.25px">Label</div>
<div class="a" style="left:566px;top:173px;width:217.6px;height:30.6px;border:1px solid #c4c4c4;border-radius:3px"></div>
<div class="t" style="left:575.00px;top:185.47px;font-size:8.9px;color:#808080;font-weight:normal;letter-spacing:0.25px">Low temperature</div>
<div class="a" style="left:789.3px;top:173px;width:217px;height:30.6px;border:1px solid #c4c4c4;border-radius:3px"></div>
<div class="t" style="left:797.70px;top:185.47px;font-size:8.9px;color:#808080;font-weight:normal;letter-spacing:0.25px">High_temperature</div>
<div class="a" style="left:566px;top:219px;width:217.6px;height:30.6px;border:1px solid #c4c4c4;border-radius:3px"></div>
<div class="t" style="left:575.00px;top:231.47px;font-size:8.9px;color:#808080;font-weight:normal;letter-spacing:0.25px">Low_humidity</div>
<div class="a" style="left:789.3px;top:219px;width:217px;height:30.6px;border:1px solid #c4c4c4;border-radius:3px"></div>
<div class="t" style="left:797.70px;top:231.47px;font-size:8.9px;color:#808080;font-weight:normal;letter-spacing:0.25px">High_humidity</div>
<div class="t" style="left:916.80px;top:458.08px;font-size:7.7px;color:#777;font-weight:normal;">Undo</div>
<div class="a" style="left:955px;top:452px;width:35.3px;height:19.4px;background:#e0e0e0;border-radius:2px"></div>
<div class="t" style="left:955px;width:35.3px;text-align:center;top:458.08px;font-size:7.7px;color:#888">Save</div>
<div class="a" style="left:963px;top:84.6px;width:51px;height:15.6px;background:#fff;border-radius:2px;box-shadow:0 0 3px 1px rgba(0,0,0,.28)"></div>
<svg style="left:966.6px;top:86.9px" width="11.5" height="11.5" viewBox="0 0 24 24"><path fill="#333" d="M3 17.25V21h3.75L17.81 9.94l-3.75-3.75L3 17.25zM20.71 7.04c.39-.39.39-1.02 0-1.41l-2.34-2.34c-.39-.39-1.02-.39-1.41 0l-1.83 1.83 3.75 3.75 1.83-1.83z"/></svg>
<svg style="left:982.3px;top:86.8px" width="11.5" height="11.5" viewBox="0 0 24 24"><path fill="#333" d="M19 9h-4V3H9v6H5l7 7 7-7zM5 18v2h14v-2H5z"/></svg>
<svg style="left:998.1px;top:87.2px" width="11" height="11" viewBox="0 0 24 24"><path fill="#333" d="M19 6.41L17.590 5 12 10.59 6.41 5 5 6.41 10.59 12 5 17.59 6.41 19 12 13.41 17.59 19 19 17.59 13.41 12z"/></svg>
<div class="t" style="left:276.90px;top:498.84px;font-size:8.7px;color:#222;font-weight:normal;">Alarms</div>
<svg style="left:0;top:0" width="1020" height="724"><circle cx="277.6" cy="521.8" r="4.8" fill="none" stroke="#444" stroke-width="1.1"/><path d="M277.4 518.8 V522.2 L279.8 523.8" fill="none" stroke="#444" stroke-width="1"/></svg>
<div class="t" style="left:286.80px;top:517.67px;font-size:7.6px;color:#444;font-weight:normal;">Realtime - last 30 days</div>
<div class="a" style="left:281px;top:539.4px;width:9.6px;height:9.6px;border:1.4px solid #5f5f5f;border-radius:1.2px"></div>
<div class="t" style="left:318.40px;top:540.37px;font-size:7.6px;color:#737373;font-weight:normal;">Created time</div>
<svg style="left:365.3px;top:540.4px" width="8.2" height="8.2" viewBox="0 0 24 24"><path fill="#555" d="M20 12l-1.41-1.41L13 16.17V4h-2v12.17l-5.58-5.59L4 12l8 8 8-8z"/></svg>
<div class="t" style="left:436.20px;top:540.37px;font-size:7.6px;color:#737373;font-weight:normal;">Type 2</div>
<div class="t" style="left:499.20px;top:540.37px;font-size:7.6px;color:#737373;font-weight:normal;">Type</div>
<div class="t" style="left:574.50px;top:540.37px;font-size:7.6px;color:#737373;font-weight:normal;">Originator</div>
<div class="t" style="left:656.80px;top:540.37px;font-size:7.6px;color:#737373;font-weight:normal;">Severity</div>
<div class="t" style="left:727.60px;top:540.37px;font-size:7.6px;color:#737373;font-weight:normal;">Status</div>
<div class="a" style="left:267.6px;top:559px;width:741.4px;height:1px;background:#dcdcdc"></div>
<div class="a" style="left:281px;top:569.3000000000001px;width:9.6px;height:9.6px;border:1.4px solid #5f5f5f;border-radius:1.2px"></div>
<div class="t" style="left:318.40px;top:571.29px;font-size:7.1px;color:#333;font-weight:normal;">2025-11-14 20:22:55</div>
<div class="t" style="left:436.20px;top:571.29px;font-size:7.1px;color:#333;font-weight:normal;">AQI Sensor</div>
<div class="t" style="left:499.20px;top:571.29px;font-size:7.1px;color:#333;font-weight:normal;">Inactive</div>
<div class="t" style="left:574.50px;top:571.29px;font-size:7.1px;color:#333;font-weight:normal;">Air Quality Sensor 2</div>
<div class="t" style="left:656.80px;top:570.81px;font-size:7.2px;color:#f41c1c;font-weight:bold;">Critical</div>
<div class="t" style="left:727.60px;top:571.29px;font-size:7.1px;color:#333;font-weight:normal;">Active Unacknowledged</div>
<svg style="left:902px;top:567.6px" width="13.6" height="13.6" viewBox="0 0 24 24"><path fill="#666" d="M21.99 4c0-1.1-.89-2-1.99-2H4c-1.1 0-2 .9-2 2v12c0 1.1.9 2 2 2h14l4 4-.01-18zM18 14H6v-2h12v2zm0-3H6V9h12v2zm0-3H6V6h12v2z"/></svg>
<svg style="left:928.2px;top:567.3000000000001px" width="14" height="14" viewBox="0 0 24 24"><path fill="#444" d="M6 10c-1.1 0-2 .9-2 2s.9 2 2 2 2-.9 2-2-.9-2-2-2zm12 0c-1.1 0-2 .9-2 2s.9 2 2 2 2-.9 2-2-.9-2-2-2zm-6 0c-1.1 0-2 .9-2 2s.9 2 2 2 2-.9 2-2-.9-2-2-2z"/></svg>
<svg style="left:955.5px;top:567.6px" width="13" height="13" viewBox="0 0 24 24"><path fill="#666" d="M9 16.17L4.83 12l-1.42 1.41L9 19 21 7l-1.41-1.41z"/></svg>
<svg style="left:982px;top:567.6px" width="13" height="13" viewBox="0 0 24 24"><path fill="#555" d="M19 6.41L17.590 5 12 10.59 6.41 5 5 6.41 10.59 12 5 17.59 6.41 19 12 13.41 17.59 19 19 17.59 13.41 12z"/></svg>
<div class="a" style="left:267.6px;top:588.4px;width:741.4px;height:1px;background:#e6e6e6"></div>
<div class="a" style="left:281px;top:598.07px;width:9.6px;height:9.6px;border:1.4px solid #5f5f5f;border-radius:1.2px"></div>
<div class="t" style="left:318.40px;top:600.06px;font-size:7.1px;color:#333;font-weight:normal;">2025-11-14 20:22:55</div>
<div class="t" style="left:436.20px;top:600.06px;font-size:7.1px;color:#333;font-weight:normal;">AQI Sensor</div>
<div class="t" style="left:499.20px;top:600.06px;font-size:7.1px;color:#333;font-weight:normal;">Inactive</div>
<div class="t" style="left:574.50px;top:600.06px;font-size:7.1px;color:#333;font-weight:normal;">Air Quality Sensor 4</div>
<div class="t" style="left:656.80px;top:599.58px;font-size:7.2px;color:#f41c1c;font-weight:bold;">Critical</div>
<div class="t" style="left:727.60px;top:600.06px;font-size:7.1px;color:#333;font-weight:normal;">Active Unacknowledged</div>
<svg style="left:902px;top:596.37px" width="13.6" height="13.6" viewBox="0 0 24 24"><path fill="#666" d="M21.99 4c0-1.1-.89-2-1.99-2H4c-1.1 0-2 .9-2 2v12c0 1.1.9 2 2 2h14l4 4-.01-18zM18 14H6v-2h12v2zm0-3H6V9h12v2zm0-3H6V6h12v2z"/></svg>
<svg style="left:928.2px;top:596.07px" width="14" height="14" viewBox="0 0 24 24"><path fill="#444" d="M6 10c-1.1 0-2 .9-2 2s.9 2 2 2 2-.9 2-2-.9-2-2-2zm12 0c-1.1 0-2 .9-2 2s.9 2 2 2 2-.9 2-2-.9-2-2-2zm-6 0c-1.1 0-2 .9-2 2s.9 2 2 2 2-.9 2-2-.9-2-2-2z"/></svg>
<svg style="left:955.5px;top:596.37px" width="13" height="13" viewBox="0 0 24 24"><path fill="#666" d="M9 16.17L4.83 12l-1.42 1.41L9 19 21 7l-1.41-1.41z"/></svg>
<svg style="left:982px;top:596.37px" width="13" height="13" viewBox="0 0 24 24"><path fill="#555" d="M19 6.41L17.590 5 12 10.59 6.41 5 5 6.41 10.59 12 5 17.59 6.41 19 12 13.41 17.59 19 19 17.59 13.41 12z"/></svg>
<div class="a" style="left:267.6px;top:617.2px;width:741.4px;height:1px;background:#e6e6e6"></div>
<div class="a" style="left:281px;top:626.84px;width:9.6px;height:9.6px;border:1.4px solid #5f5f5f;border-radius:1.2px"></div>
<div class="t" style="left:318.40px;top:628.83px;font-size:7.1px;color:#333;font-weight:normal;">2025-11-14 20:22:55</div>
<div class="t" style="left:436.20px;top:628.83px;font-size:7.1px;color:#333;font-weight:normal;">AQI Sensor</div>
<div class="t" style="left:499.20px;top:628.83px;font-size:7.1px;color:#333;font-weight:normal;">Inactive</div>
<div class="t" style="left:574.50px;top:628.83px;font-size:7.1px;color:#333;font-weight:normal;">Air Quality Sensor 3</div>
<div class="t" style="left:656.80px;top:628.35px;font-size:7.2px;color:#f41c1c;font-weight:bold;">Critical</div>
<div class="t" style="left:727.60px;top:628.83px;font-size:7.1px;color:#333;font-weight:normal;">Active Unacknowledged</div>
<svg style="left:902px;top:625.14px" width="13.6" height="13.6" viewBox="0 0 24 24"><path fill="#666" d="M21.99 4c0-1.1-.89-2-1.99-2H4c-1.1 0-2 .9-2 2v12c0 1.1.9 2 2 2h14l4 4-.01-18zM18 14H6v-2h12v2zm0-3H6V9h12v2zm0-3H6V6h12v2z"/></svg>
<svg style="left:928.2px;top:624.84px" width="14" height="14" viewBox="0 0 24 24"><path fill="#444" d="M6 10c-1.1 0-2 .9-2 2s.9 2 2 2 2-.9 2-2-.9-2-2-2zm12 0c-1.1 0-2 .9-2 2s.9 2 2 2 2-.9 2-2-.9-2-2-2zm-6 0c-1.1 0-2 .9-2 2s.9 2 2 2 2-.9 2-2-.9-2-2-2z"/></svg>
<svg style="left:955.5px;top:625.14px" width="13" height="13" viewBox="0 0 24 24"><path fill="#666" d="M9 16.17L4.83 12l-1.42 1.41L9 19 21 7l-1.41-1.41z"/></svg>
<svg style="left:982px;top:625.14px" width="13" height="13" viewBox="0 0 24 24"><path fill="#555" d="M19 6.41L17.590 5 12 10.59 6.41 5 5 6.41 10.59 12 5 17.59 6.41 19 12 13.41 17.59 19 19 17.59 13.41 12z"/></svg>
<div class="a" style="left:267.6px;top:645.9px;width:741.4px;height:1px;background:#e6e6e6"></div>
<div class="a" style="left:281px;top:655.6100000000001px;width:9.6px;height:9.6px;border:1.4px solid #5f5f5f;border-radius:1.2px"></div>
<div class="t" style="left:318.40px;top:657.60px;font-size:7.1px;color:#333;font-weight:normal;">2025-11-14 20:22:55</div>
<div class="t" style="left:436.20px;top:657.60px;font-size:7.1px;color:#333;font-weight:normal;">AQI Sensor</div>
<div class="t" style="left:499.20px;top:657.60px;font-size:7.1px;color:#333;font-weight:normal;">Inactive</div>
<div class="t" style="left:574.50px;top:657.60px;font-size:7.1px;color:#333;font-weight:normal;">Air Quality Sensor 1</div>
<div class="t" style="left:656.80px;top:657.12px;font-size:7.2px;color:#f41c1c;font-weight:bold;">Critical</div>
<div class="t" style="left:727.60px;top:657.60px;font-size:7.1px;color:#333;font-weight:normal;">Active Unacknowledged</div>
<svg style="left:902px;top:653.9100000000001px" width="13.6" height="13.6" viewBox="0 0 24 24"><path fill="#666" d="M21.99 4c0-1.1-.89-2-1.99-2H4c-1.1 0-2 .9-2 2v12c0 1.1.9 2 2 2h14l4 4-.01-18zM18 14H6v-2h12v2zm0-3H6V9h12v2zm0-3H6V6h12v2z"/></svg>
<svg style="left:928.2px;top:653.6100000000001px" width="14" height="14" viewBox="0 0 24 24"><path fill="#444" d="M6 10c-1.1 0-2 .9-2 2s.9 2 2 2 2-.9 2-2-.9-2-2-2zm12 0c-1.1 0-2 .9-2 2s.9 2 2 2 2-.9 2-2-.9-2-2-2zm-6 0c-1.1 0-2 .9-2 2s.9 2 2 2 2-.9 2-2-.9-2-2-2z"/></svg>
<svg style="left:955.5px;top:653.9100000000001px" width="13" height="13" viewBox="0 0 24 24"><path fill="#666" d="M9 16.17L4.83 12l-1.42 1.41L9 19 21 7l-1.41-1.41z"/></svg>
<svg style="left:982px;top:653.9100000000001px" width="13" height="13" viewBox="0 0 24 24"><path fill="#555" d="M19 6.41L17.590 5 12 10.59 6.41 5 5 6.41 10.59 12 5 17.59 6.41 19 12 13.41 17.59 19 19 17.59 13.41 12z"/></svg>
<div class="a" style="left:267.6px;top:670.2px;width:746px;height:1px;background:#d8d8d8"></div>
<div class="a" style="left:1009px;top:529px;width:3px;height:61.5px;background:#c8c8c8;border-radius:1px"></div>
<div class="t" style="left:725.00px;top:682.86px;font-size:6.9px;color:#777;font-weight:normal;">Items per page:</div>
<div class="a" style="left:778.6px;top:674.3px;width:45.8px;height:23px;border:1px solid #cfcfcf;border-radius:3px"></div>
<div class="t" style="left:787.20px;top:682.82px;font-size:7.3px;color:#444;font-weight:normal;">10</div>
<svg style="left:806.5px;top:679.3px" width="13" height="13" viewBox="0 0 24 24"><path fill="#555" d="M7 10l5 5 5-5z"/></svg>
<div class="t" style="left:844.90px;top:682.91px;font-size:7.2px;color:#888;font-weight:normal;">1 – 10 of 12</div>
<svg style="left:0;top:0" width="1" height="1"><path d="M911.4 682.9 V689.6999999999999" stroke="#d2d2d2" stroke-width="1.1" fill="none"/><path d="M918.2 682.9 L914.6 686.3 L918.2 689.6999999999999" stroke="#d2d2d2" stroke-width="1.1" fill="none"/><path d="M942.8000000000001 682.9 L939.2 686.3 L942.8000000000001 689.6999999999999" stroke="#d2d2d2" stroke-width="1.1" fill="none"/><path d="M966.3 682.9 L969.9 686.3 L966.3 689.6999999999999" stroke="#606060" stroke-width="1.1" fill="none"/><path d="M991.4 682.9 L995.0 686.3 L991.4 689.6999999999999" stroke="#606060" stroke-width="1.1" fill="none"/><path d="M997.5 682.9 V689.6999999999999" stroke="#606060" stroke-width="1.1" fill="none"/></svg></body></html>
